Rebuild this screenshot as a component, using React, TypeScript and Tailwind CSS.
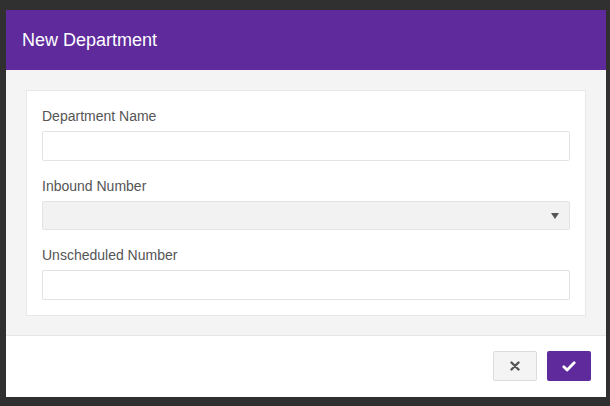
export default function App() {
  return (
    <div className="h-[406px] w-[610px] bg-[#303030] pl-[6px] pt-[10px] font-['Liberation_Sans',Arial,sans-serif]">
      <div className="flex h-[387px] w-[600px] flex-col bg-white">
        {/* header */}
        <div className="flex h-[60px] shrink-0 items-center bg-[#5e2a9c] px-4">
          <h1 className="text-[18px] text-white">New Department</h1>
        </div>

        {/* body */}
        <div className="shrink-0 border-b border-[#e5e5e5] bg-[#f4f4f4] px-5 pt-5 pb-[19px]">
          <div className="border border-[#e8e8e8] bg-white px-[15px] pt-[17px] pb-[15px]">
            <label className="block text-[14px] leading-[16px] text-[#555]">Department Name</label>
            <input className="mt-[7px] block h-[30px] w-full rounded-[2px] border border-[#e3e3e3] bg-white px-2 text-sm outline-none" />

            <label className="mt-[17px] block text-[14px] leading-[16px] text-[#555]">Inbound Number</label>
            <div className="relative mt-[7px] h-[29px] w-full rounded-[2px] border border-[#e3e3e3] bg-[#f2f2f2]">
              <svg className="absolute right-[10px] top-[11px]" width="8" height="6" viewBox="0 0 8 6">
                <path d="M0 0h8L4 6z" fill="#555" />
              </svg>
            </div>

            <label className="mt-[17px] block text-[14px] leading-[16px] text-[#555]">Unscheduled Number</label>
            <input className="mt-[7px] block h-[30px] w-full rounded-[2px] border border-[#e3e3e3] bg-white px-2 text-sm outline-none" />
          </div>
        </div>

        {/* footer */}
        <div className="flex justify-end gap-[10px] pr-[15px] pt-[15px]">
          <button className="flex h-[30px] w-[44px] items-center justify-center rounded-[2px] border border-[#dcdcdc] bg-[#f4f4f4]">
            <svg width="10" height="10" viewBox="0 0 10 10">
              <path d="M1.5 1.5l7 7M8.5 1.5l-7 7" stroke="#555" strokeWidth="2.4" strokeLinecap="round" />
            </svg>
          </button>
          <button className="flex h-[30px] w-[44px] items-center justify-center rounded-[2px] bg-[#5e2a9c]">
            <svg width="14" height="11" viewBox="0 0 14 11">
              <path d="M1.8 5.8l3.3 3.2L12.2 1.8" stroke="#fff" strokeWidth="2.8" fill="none" strokeLinecap="round" strokeLinejoin="round" />
            </svg>
          </button>
        </div>
      </div>
    </div>
  );
}
